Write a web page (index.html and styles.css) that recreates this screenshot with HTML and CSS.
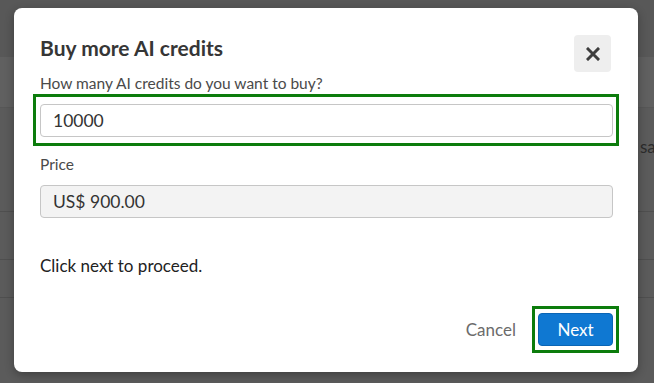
FILE: index.html
```html
<!DOCTYPE html>
<html lang="en">
<head>
    <meta charset="UTF-8">
    <title>Buy more AI credits</title>
    <link rel="stylesheet" href="styles.css">
</head>
<body>
    <!-- page behind the dialog -->
    <div class="page">
        <div class="page-top"></div>
        <div class="page-band"></div>
        <div class="page-row"><span class="page-text">save changes</span></div>
        <div class="page-row short"></div>
        <div class="page-row thin"></div>
        <div class="page-foot"></div>
    </div>
    <div class="overlay"></div>

    <div class="modal">
        <div class="modal-header">
            <h2 class="modal-title">Buy more AI credits</h2>
            <button class="close-btn" aria-label="Close">
                <svg width="14" height="14" viewBox="0 0 14 14">
                    <path d="M2 2 L12 12 M12 2 L2 12" stroke="#3d3d3d" stroke-width="3" stroke-linecap="square"/>
                </svg>
            </button>
        </div>

        <label class="field-label">How many AI credits do you want to buy?</label>
        <div class="highlight">
            <input class="field" type="text" value="10000">
        </div>

        <label class="field-label price-label">Price</label>
        <input class="field readonly" type="text" value="US$ 900.00" readonly>

        <p class="hint">Click next to proceed.</p>

        <div class="modal-footer">
            <button class="cancel-btn">Cancel</button>
            <div class="highlight btn-wrap">
                <button class="next-btn">Next</button>
            </div>
        </div>
    </div>
</body>
</html>
```

FILE: styles.css
```css
body {
    margin: 0;
    font-family: Lato, "Open Sans", sans-serif;
    width: 654px;
    height: 383px;
    overflow: hidden;
    position: relative;
    background: #5b5b5b;
}
.page {
    display: flex;
    flex-direction: column;
}
.page-top {
    height: 57px;
    background: #585858;
}
.page-band {
    height: 50px;
    background: #606060;
    border-bottom: 1px solid #575757;
}
.page-row {
    height: 104px;
    border-bottom: 1px solid #4f4f4f;
    padding-left: 640px;
    padding-top: 28px;
    box-sizing: border-box;
    white-space: nowrap;
    overflow: hidden;
}
.page-row.short {
    height: 48px;
    padding-top: 0;
}
.page-row.thin {
    height: 38px;
    padding-top: 0;
}
.page-foot {
    flex: 1;
    background: #575757;
}
.page-text {
    font-size: 17px;
    color: #2c2c2c;
}
.overlay {
    position: absolute;
    inset: 0;
}
.modal {
    position: absolute;
    left: 14px;
    top: 8px;
    width: 624px;
    height: 364px;
    box-sizing: border-box;
    background: #fff;
    border-radius: 8px;
    box-shadow: 0 3px 10px rgba(0,0,0,0.3);
    padding: 27px 25px 0 26px;
    display: flex;
    flex-direction: column;
}
.modal-header {
    display: flex;
    justify-content: space-between;
    align-items: flex-start;
}
.modal-title {
    margin: 1px 0 0;
    font-size: 21px;
    line-height: 24px;
    font-weight: 700;
    color: #363636;
}
.close-btn {
    width: 37px;
    height: 37px;
    margin-right: 2px;
    border: none;
    border-radius: 4px;
    background: #eeeeee;
    display: flex;
    align-items: center;
    justify-content: center;
    padding: 0;
}
.field-label {
    display: block;
    margin-top: 2px;
    font-size: 15.5px;
    line-height: 18px;
    color: #4a4a4a;
}
.highlight {
    border: 3px solid #0c7c0c;
}
.modal > .highlight {
    margin: 2px -6px 0 -7px;
    padding: 7px 3px 6px 4px;
}
.field {
    display: block;
    width: 100%;
    box-sizing: border-box;
    height: 33px;
    padding: 0 12px;
    font-family: inherit;
    font-size: 17.5px;
    color: #333;
    border: 1px solid #c6c6c6;
    border-radius: 4px;
    background: #fff;
    outline: none;
}
.field.readonly {
    background: #f3f3f3;
    margin-top: 12px;
}
.price-label {
    margin-top: 9px;
}
.hint {
    margin: 37px 0 0;
    font-size: 17px;
    line-height: 21px;
    color: #222;
}
.modal-footer {
    display: flex;
    justify-content: flex-end;
    align-items: center;
    gap: 16px;
    margin: 30px -6px 0 0;
}
.cancel-btn {
    border: none;
    background: none;
    padding: 0;
    font-family: inherit;
    font-size: 17px;
    color: #6b6b6b;
}
.btn-wrap {
    padding: 4px 3px;
}
.next-btn {
    width: 75px;
    height: 33px;
    border: 1px solid #0a65b5;
    border-radius: 4px;
    background: #0f78d2;
    color: #fff;
    font-family: inherit;
    font-size: 17px;
    padding: 0;
    display: block;
}
```
